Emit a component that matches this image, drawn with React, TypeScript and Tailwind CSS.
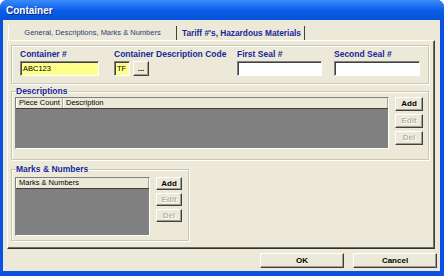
const raised =
  "border border-t-white border-l-white border-r-[#404040] border-b-[#404040] shadow-[inset_-1px_-1px_0_#a09e92] bg-[#ece9d8]";
const sunken =
  "border border-t-[#808080] border-l-[#808080] border-r-white border-b-white shadow-[inset_1px_1px_0_#404040]";

function Btn({ label, disabled, className }: { label: string; disabled?: boolean; className: string }) {
  return (
    <div
      className={`${raised} ${className} flex items-center justify-center font-bold text-[8px] leading-none ${
        disabled ? "text-[#b5b2a3] [text-shadow:1px_1px_0_white]" : "text-black"
      }`}
    >
      {label}
    </div>
  );
}

function Field({ w, value, yellow }: { w: string; value: string; yellow?: boolean }) {
  return (
    <div className={`${sunken} ${w} h-[15px] ${yellow ? "bg-[#ffff8c]" : "bg-white"} px-[2px] flex items-center text-[7.5px] text-black`}>
      {value}
    </div>
  );
}

function Group({ title, className, children }: { title: string; className: string; children: React.ReactNode }) {
  return (
    <fieldset className={`border border-[#c9c6b6] shadow-[inset_1px_1px_0_white,1px_1px_0_white] ${className}`}>
      <legend className="ml-[1px] pr-[1px] text-[8.5px] leading-[10px] font-bold text-[#16289a]">{title}</legend>
      {children}
    </fieldset>
  );
}

function List({ headers, w, h }: { headers: { label: string; w?: string }[]; w: string; h: string }) {
  return (
    <div className={`${w} ${h} flex flex-col border border-t-[#808080] border-l-[#808080] border-r-white border-b-white bg-[#808080]`}>
      <div className="h-[11px] flex bg-[#ece9d8] border-b border-[#404040] shrink-0">
        {headers.map((c, i) => (
          <div
            key={i}
            className={`${c.w ?? "flex-1"} border-r border-[#aca899] shadow-[inset_1px_0_0_white] pl-[3px] text-[7.5px] leading-[10px] text-black`}
          >
            {c.label}
          </div>
        ))}
      </div>
    </div>
  );
}

export default function App() {
  return (
    <div className="w-[444px] h-[276px] flex flex-col rounded-t-[7px] overflow-hidden bg-[#0b52e2] font-['Liberation_Sans',Arial,sans-serif]">
      {/* Title bar */}
      <div className="h-[20px] shrink-0 flex items-center pl-[6px] bg-gradient-to-b from-[#3a8cfb] via-[#0b5ee8] to-[#0452d8]">
        <span className="text-white font-bold text-[10px] [text-shadow:1px_1px_0_#0a2a7a]">Container</span>
      </div>

      <div className="flex-1 ml-[3px] mr-[4px] mb-[5px] bg-[#ece9d8] flex flex-col">
        {/* Tabs */}
        <div className="h-[20px] shrink-0 flex items-end pl-[5px]">
          <div className="w-[168px] h-[15px] flex items-center justify-center text-[7.5px] text-[#2a3d7c] border-l border-white">
            General, Descriptions, Marks &amp; Numbers
          </div>
          <div className="w-[129px] h-[14px] flex items-center pl-[5px] border-l border-r border-[#404040] text-[8.3px] font-bold text-[#16289a]">
            Tariff #&apos;s, Hazardous Materials
          </div>
        </div>

        {/* Tab panel */}
        <div className="ml-[4px] w-[428px] h-[209px] shrink-0 border border-t-white border-l-white border-r-[#404040] border-b-[#303030] shadow-[inset_-1px_-1px_0_#6f6d62] px-[3px] pt-[4px] flex flex-col">
          {/* Top group */}
          <div className="h-[39px] w-[418px] shrink-0 border border-[#c9c6b6] shadow-[inset_1px_1px_0_white,1px_1px_0_white] pl-[8px] pt-[3px] flex">
            <div className="w-[94px] flex flex-col gap-[2px]">
              <div className="text-[8.5px] leading-[10px] font-bold text-[#16289a]">Container #</div>
              <Field value="ABC123" w="w-[79px]" yellow />
            </div>
            <div className="w-[123px] flex flex-col gap-[2px]">
              <div className="text-[8.5px] leading-[10px] font-bold text-[#16289a] whitespace-nowrap">Container Description Code</div>
              <div className="flex gap-[3px]">
                <Field value="TF" w="w-[16px]" yellow />
                <Btn label="..." className="w-[16px] h-[15px]" />
              </div>
            </div>
            <div className="w-[97px] flex flex-col gap-[2px]">
              <div className="text-[8.5px] leading-[10px] font-bold text-[#16289a]">First Seal #</div>
              <Field value="" w="w-[85px]" />
            </div>
            <div className="flex flex-col gap-[2px]">
              <div className="text-[8.5px] leading-[10px] font-bold text-[#16289a]">Second Seal #</div>
              <Field value="" w="w-[86px]" />
            </div>
          </div>

          {/* Descriptions */}
          <Group title="Descriptions" className="mt-[2px] w-[418px] h-[74px] shrink-0 pl-[3px] pt-[1px] flex gap-[6px]">
            <List headers={[{ label: "Piece Count", w: "w-[47px]" }, { label: "Description" }]} w="w-[374px]" h="h-[52px]" />
            <div className="flex flex-col gap-[3px]">
              <Btn label="Add" className="w-[28px] h-[14px]" />
              <Btn label="Edit" disabled className="w-[28px] h-[14px]" />
              <Btn label="Del" disabled className="w-[28px] h-[14px]" />
            </div>
          </Group>

          {/* Marks & Numbers */}
          <Group title="Marks & Numbers" className="mt-[4px] w-[178px] h-[77px] shrink-0 pl-[3px] pt-[3px] flex gap-[6px]">
            <List headers={[{ label: "Marks & Numbers" }]} w="w-[135px]" h="h-[59px]" />
            <div className="flex flex-col gap-[3px]">
              <Btn label="Add" className="w-[26px] h-[13px]" />
              <Btn label="Edit" disabled className="w-[26px] h-[13px]" />
              <Btn label="Del" disabled className="w-[26px] h-[13px]" />
            </div>
          </Group>
        </div>

        {/* Bottom buttons */}
        <div className="flex-1 flex items-start justify-end pt-[4px] pr-[3px] gap-[9px]">
          <Btn label="OK" className="w-[84px] h-[15px]" />
          <Btn label="Cancel" className="w-[84px] h-[15px]" />
        </div>
      </div>
    </div>
  );
}
